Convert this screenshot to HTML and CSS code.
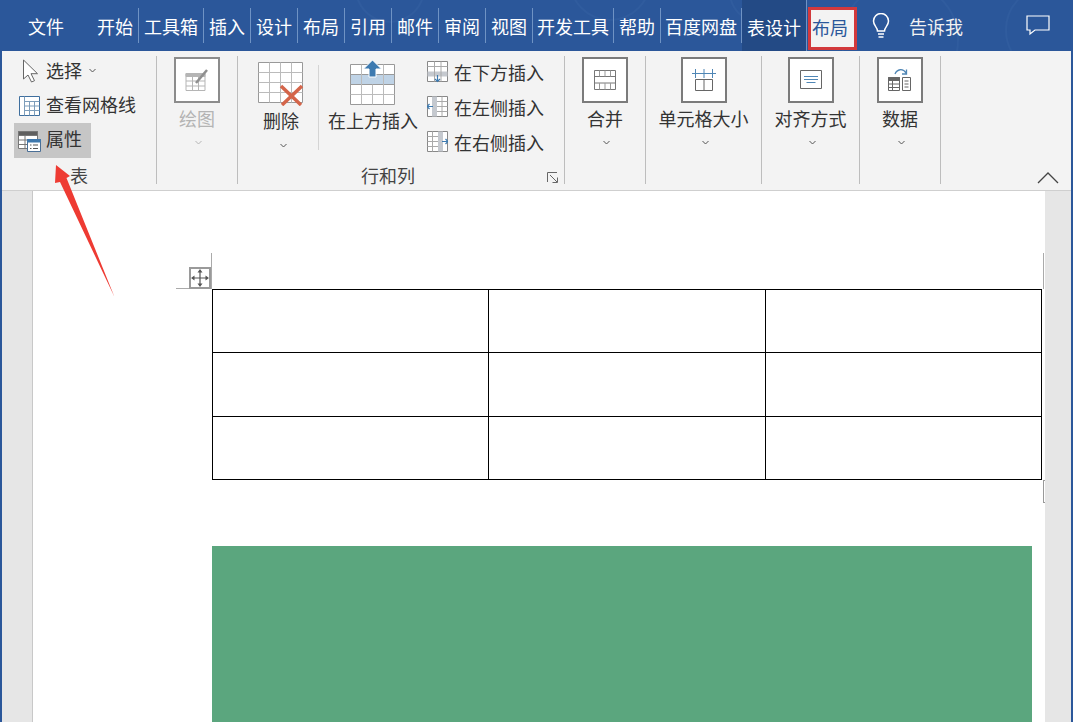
FILE: index.html
```html
<!DOCTYPE html>
<html lang="zh-CN">
<head>
    <meta charset="UTF-8">
    <title>Word 表格布局</title>
    <link rel="stylesheet" href="styles.css">
</head>
<body>
    <header class="titlebar">
        <svg class="title-art" width="1073" height="51" viewBox="0 0 1073 51" fill="none" stroke="#305c9e" stroke-width="2">
            <circle cx="390" cy="-12" r="34"/>
            <circle cx="610" cy="-20" r="40"/>
            <circle cx="900" cy="40" r="58"/>
            <circle cx="1050" cy="30" r="44"/>
            <circle cx="760" cy="-8" r="30"/>
        </svg>
        <div class="tab tab-file">文件</div>
        <div class="tab">开始</div>
        <div class="tab">工具箱</div>
        <div class="tab">插入</div>
        <div class="tab">设计</div>
        <div class="tab">布局</div>
        <div class="tab">引用</div>
        <div class="tab">邮件</div>
        <div class="tab">审阅</div>
        <div class="tab">视图</div>
        <div class="tab tab-tight">开发工具</div>
        <div class="tab">帮助</div>
        <div class="tab tab-tight">百度网盘</div>
        <div class="tab tab-context">表设计</div>
        <div class="tab tab-active">布局</div>
        <svg class="bulb" width="18" height="26" viewBox="0 0 18 26" fill="none" stroke="#fff" stroke-width="1.5">
            <path d="M5.5 18c0-4-4-5-4-10a7.500 7.500 0 0 1 15 0c0 5-4 6-4 10z"/>
            <path d="M6 21h6M6.500 24h5"/>
        </svg>
        <div class="tell-me">告诉我</div>
        <svg class="comment" width="24" height="21" viewBox="0 0 24 21" fill="none" stroke="#fff" stroke-width="1.200">
            <path d="M1 1h22v14H9l-5 4v-4H1z"/>
        </svg>
    </header>

    <div class="workspace">
        <section class="ribbon">
            <div class="group group-table">
                <div class="small-list">
                    <div class="small-btn select-btn">
                        <svg class="small-icon" width="24" height="24" viewBox="0 0 24 24" fill="#fff" stroke="#666">
                            <path d="M5.500 1v19l4.500-4 3.500 7 3-1.300-3.500-7h6.500z"/>
                        </svg>
                        <span>选择</span>
                        <svg class="chev" width="7" height="5" viewBox="0 0 7 5" fill="none" stroke="#555"><path d="M.5 1l3 3 3-3"/></svg>
                    </div>
                    <div class="small-btn grid-btn">
                        <svg class="small-icon" width="24" height="22" viewBox="0 0 24 22" fill="#fff" stroke="#3f6f9e">
                            <path d="M1.500 1.500h20v19h-20z"/>
                            <path d="M6.500 6.500h15M6.500 11h15M6.500 15.500h15M6.500 1.500v19M11.500 6.500v14M16.500 6.500v14" stroke="#7d9dba"/>
                        </svg>
                        <span>查看网格线</span>
                    </div>
                    <div class="small-btn is-on">
                        <svg class="small-icon" width="24" height="22" viewBox="0 0 24 22" fill="#fff" stroke="#777">
                            <path d="M.500 1.500h19v17h-19z"/>
                            <path d="M.500 1.500h19v4h-19z" fill="#5f5f5f"/>
                            <path d="M.500 10h19M.500 14.500h19M7 5.500v13"/>
                            <path d="M9.500 9.500h13v12h-13z" stroke="#4a6f96"/>
                            <path d="M9.500 9.500h13v2.500h-13z" fill="#3f78ad" stroke="#3f78ad"/>
                            <path d="M12 15h1.500M15 15h5M12 18.500h1.500M15 18.500h5" stroke="#555"/>
                        </svg>
                        <span>属性</span>
                    </div>
                </div>
                <div class="group-label">表</div>
            </div>

            <div class="group group-draw">
                <div class="big-btn is-off">
                    <div class="big-box">
                        <svg width="26" height="26" viewBox="0 0 26 26" fill="none" stroke="#b5b5b5">
                            <path d="M2 6.500h19v17H2z"/>
                            <path d="M2 6.500h19v3H2z" fill="#b5b5b5"/>
                            <path d="M2 14h19M2 19h19M8.500 9.500v14M14.500 9.500v14"/>
                            <path d="M12 16L23 3" stroke="#8f8f8f" stroke-width="2.500"/>
                        </svg>
                    </div>
                    <span>绘图</span>
                    <svg class="chev" width="7" height="5" viewBox="0 0 7 5" fill="none" stroke="#b5b5b5"><path d="M.5 1l3 3 3-3"/></svg>
                </div>
            </div>

            <div class="group group-rows">
                <div class="rows-body">
                    <div class="tall-btn delete-btn">
                        <svg width="46" height="44" viewBox="0 0 46 44" fill="#fff" stroke="#999">
                            <path d="M.500.500h44v40h-44z"/>
                            <path d="M.500 10.500h44M.500 20.500h44M.500 30.500h44M11.500.500v40M22.500.500v40M33.500.500v40" stroke="#bbb"/>
                            <path d="M23 24l20 19M44 24L24 43" stroke="#d4654a" stroke-width="3.500"/>
                        </svg>
                        <span>删除</span>
                        <svg class="chev" width="7" height="5" viewBox="0 0 7 5" fill="none" stroke="#555"><path d="M.5 1l3 3 3-3"/></svg>
                    </div>
                    <div class="rows-sep"></div>
                    <div class="tall-btn above-btn">
                        <svg width="46" height="46" viewBox="0 0 46 46" fill="#fff" stroke="#999">
                            <path d="M.500 4.500h44v40h-44z"/>
                            <path d="M.500 14.500h44v10h-44z" fill="#bfd3e6"/>
                            <path d="M.500 34.500h44M11.500 4.500v40M22.500 24.500v20M33.500 4.500v40" stroke="#bbb"/>
                            <path d="M22.500 0l9 9h-5.500v8h-7v-8h-5.500z" fill="#3d7ab0" stroke="#fff"/>
                        </svg>
                        <span>在上方插入</span>
                    </div>
                    <div class="insert-list">
                        <div class="insert-item">
                            <svg width="21" height="22" viewBox="0 0 21 22" fill="#fff" stroke="#888">
                                <path d="M.500.500h20v20h-20z"/>
                                <path d="M.500 10.500h20v5h-20z" fill="#c5c9cf" stroke="none"/>
                                <path d="M.500 5.500h20M7.500.500v20M14 .500v20" stroke="#aaa"/>
                                <path d="M10.500 14v6M8 18l2.500 2.500 2.500-2.500" fill="none" stroke="#3d7ab0" stroke-width="1.200"/>
                            </svg>
                            <span>在下方插入</span>
                        </div>
                        <div class="insert-item">
                            <svg width="21" height="22" viewBox="0 0 21 22" fill="#fff" stroke="#888">
                                <path d="M.500.500h20v20h-20z"/>
                                <path d="M5 .500h5v20H5z" fill="#c5c9cf" stroke="none"/>
                                <path d="M10 5.500h10.500M10 10.500h10.500M10 15.500h10.500M15 .500v20" stroke="#aaa"/>
                                <path d="M6 10.500H0M2.500 8L0 10.500 2.500 13" fill="none" stroke="#3d7ab0" stroke-width="1.200"/>
                            </svg>
                            <span>在左侧插入</span>
                        </div>
                        <div class="insert-item">
                            <svg width="21" height="22" viewBox="0 0 21 22" fill="#fff" stroke="#888">
                                <path d="M.500.500h20v20h-20z"/>
                                <path d="M11 .500h5v20h-5z" fill="#c5c9cf" stroke="none"/>
                                <path d="M.500 5.500H11M.500 10.500H11M.500 15.500H11M5.500 .500v20" stroke="#aaa"/>
                                <path d="M15 10.500h6M18.500 8l2.500 2.500-2.500 2.500" fill="none" stroke="#3d7ab0" stroke-width="1.200"/>
                            </svg>
                            <span>在右侧插入</span>
                        </div>
                    </div>
                </div>
                <div class="label-row">
                    <div class="group-label">行和列</div>
                    <svg class="launcher" width="11" height="11" viewBox="0 0 11 11" fill="none" stroke="#666">
                        <path d="M.500 10V.500H10"/>
                        <path d="M3 3l7 7M10.500 5.500v5h-5"/>
                    </svg>
                </div>
            </div>

            <div class="group group-merge">
                <div class="big-btn">
                    <div class="big-box">
                        <svg width="22" height="20" viewBox="0 0 22 20" fill="none" stroke="#777">
                            <path d="M.500.500h21v19H.500z"/>
                            <path d="M.500 6.500h21M.500 13h21"/>
                            <path d="M5.500.500v6M11 .500v6M16.500 .500v6M5.500 13v6.500M11 13v6.500M16.500 13v6.500" stroke="#999"/>
                        </svg>
                    </div>
                    <span>合并</span>
                    <svg class="chev" width="7" height="5" viewBox="0 0 7 5" fill="none" stroke="#555"><path d="M.5 1l3 3 3-3"/></svg>
                </div>
            </div>

            <div class="group group-size">
                <div class="big-btn">
                    <div class="big-box">
                        <svg width="24" height="22" viewBox="0 0 24 22" fill="none" stroke="#666">
                            <path d="M3.500 10.500h17v11h-17zM12 10.500v11"/>
                            <path d="M0 4.500h24M3.500 0v9M12 0v9M20.500 0v9" stroke="#4f86b5"/>
                        </svg>
                    </div>
                    <span>单元格大小</span>
                    <svg class="chev" width="7" height="5" viewBox="0 0 7 5" fill="none" stroke="#555"><path d="M.5 1l3 3 3-3"/></svg>
                </div>
            </div>

            <div class="group group-align">
                <div class="big-btn">
                    <div class="big-box">
                        <svg width="22" height="20" viewBox="0 0 22 20" fill="none" stroke="#666">
                            <path d="M.500.500h21v18H.500z"/>
                            <path d="M4 6.500h14M4 9.500h14M6.500 12.500h9" stroke="#4f86b5"/>
                        </svg>
                    </div>
                    <span>对齐方式</span>
                    <svg class="chev" width="7" height="5" viewBox="0 0 7 5" fill="none" stroke="#555"><path d="M.5 1l3 3 3-3"/></svg>
                </div>
            </div>

            <div class="group group-data">
                <div class="big-btn">
                    <div class="big-box">
                        <svg width="24" height="24" viewBox="0 0 24 24" fill="#fff" stroke="#666">
                            <path d="M.500 9.500h11v13H.500z"/>
                            <path d="M.500 9.500h11v3H.500z" fill="#666"/>
                            <path d="M.500 16h11M.500 19.500h11M4.500 12.500v10"/>
                            <path d="M14.500 9.500h8v13h-8zM16.500 13h4M16.500 16h4M16.500 19h4"/>
                            <path d="M7 6c2-5 8-6 11-1M18.500 1.500V6H14" fill="none" stroke="#4f86b5" stroke-width="1.300"/>
                        </svg>
                    </div>
                    <span>数据</span>
                    <svg class="chev" width="7" height="5" viewBox="0 0 7 5" fill="none" stroke="#555"><path d="M.5 1l3 3 3-3"/></svg>
                </div>
            </div>

            <div class="collapse-area">
                <svg width="22" height="13" viewBox="0 0 22 13" fill="none" stroke="#444" stroke-width="1.300">
                    <path d="M1 12L11 2l10 10"/>
                </svg>
            </div>
        </section>

        <main class="doc-area">
            <div class="page">
                <div class="ruler-top"></div>
                <div class="ruler-left"></div>
                <div class="ruler-right"></div>
                <div class="ruler-end"></div>
                <div class="move-handle">
                    <svg width="18" height="18" viewBox="0 0 18 18" fill="#555" stroke="#555">
                        <path d="M9 2v14M2 9h14" fill="none" stroke-width="1.200"/>
                        <path d="M9 0l2.500 3.500h-5zM9 18l2.500-3.500h-5zM0 9l3.500-2.500v5zM18 9l-3.500-2.500v5z" stroke="none"/>
                    </svg>
                </div>
                <table class="doc-table">
                    <tr><td class="col-a"></td><td class="col-b"></td><td class="col-a"></td></tr>
                    <tr class="row-mid"><td></td><td></td><td></td></tr>
                    <tr><td></td><td></td><td></td></tr>
                </table>
                <div class="green-block"></div>
            </div>
        </main>
    </div>

    <svg class="arrow" width="130" height="150" viewBox="0 0 130 150">
        <polygon points="56,15 70,26 66.500,28 114.500,147 60,32 55,33" fill="#ee3b33"/>
    </svg>
</body>
</html>
```

FILE: styles.css
```css
html, body {
    margin: 0;
    padding: 0;
    height: 722px;
    overflow: hidden;
}

body {
    position: relative;
    background-color: #2b579a;
    font-family: "Noto Sans CJK SC", "Noto Sans", sans-serif;
    font-size: 18px;
    color: #333333;
}

/* title bar */
.titlebar {
    position: relative;
    display: flex;
    align-items: center;
    height: 51px;
    padding-left: 23px;
    box-sizing: border-box;
    background-color: #2b579a;
    color: #ffffff;
}

.title-art {
    position: absolute;
    left: 0;
    top: 0;
}

.tab {
    position: relative;
    height: 35px;
    padding: 0 5px;
    line-height: 36px;
    border-right: 1px solid #6f93c4;
    white-space: nowrap;
}

.tab-file {
    margin-right: 23px;
    border-right: none;
}

.tab-tight {
    padding: 0 4px;
}

.tab-context {
    height: 51px;
    line-height: 54px;
    background-color: #234a85;
}

.tab-active {
    align-self: flex-start;
    width: 49px;
    height: 43px;
    margin: 7px 0 0 1px;
    padding: 0 5px 0 0;
    box-sizing: border-box;
    line-height: 34px;
    text-align: center;
    background-color: #f3f3f3;
    color: #2b579a;
    border: 3px solid #d2393c;
}

.bulb {
    position: relative;
    margin-left: 15px;
}

.tell-me {
    position: relative;
    margin-left: 19px;
    color: #f2f2f2;
}

.comment {
    position: relative;
    margin-left: 63px;
}

/* ribbon */
.workspace {
    margin: 0 2px;
}

.ribbon {
    display: flex;
    height: 140px;
    padding-top: 5px;
    box-sizing: border-box;
    background-color: #f3f3f3;
    border-bottom: 1px solid #cfcfcf;
}

.group {
    display: flex;
    flex-direction: column;
    height: 128px;
    border-right: 1px solid #bdbdbd;
}

.group-table { width: 154px; }
.group-draw { width: 80px; }
.group-rows { width: 326px; }
.group-merge { width: 80px; }
.group-size { width: 115px; }
.group-align { width: 97px; }
.group-data { width: 80px; }

.group-label {
    height: 20px;
    line-height: 20px;
    text-align: center;
    color: #444444;
}

.small-list {
    flex: 1;
    margin-top: -3px;
    padding-left: 12px;
}

.small-btn {
    display: flex;
    align-items: center;
    gap: 4px;
    width: 77px;
    height: 35px;
    white-space: nowrap;
}

.small-btn.is-on {
    background-color: #c6c6c6;
}

.small-btn span {
    margin-top: -2px;
}

.small-btn.grid-btn span {
    margin-top: -4px;
}

.small-btn.is-on span {
    margin-top: -5px;
}

.small-btn .small-icon {
    flex: none;
    margin-left: 4px;
}

.small-btn .chev {
    flex: none;
    margin-left: 3px;
}

.group-table .group-label {
    margin-top: -2px;
    margin-bottom: -1px;
}

/* big buttons with a boxed icon */
.big-btn {
    flex: 1;
    display: flex;
    flex-direction: column;
    align-items: center;
    padding-top: 1px;
    white-space: nowrap;
}

.big-box {
    display: flex;
    align-items: center;
    justify-content: center;
    width: 46px;
    height: 46px;
    box-sizing: border-box;
    background-color: #ffffff;
    border: 2px solid #7b7b7b;
}

.big-btn span {
    margin-top: 2px;
    line-height: 26px;
}

.big-btn .chev {
    margin: 9px 0 0 3px;
}

.big-btn.is-off .big-box {
    border-color: #8c8c8c;
}

.big-btn.is-off span {
    color: #b4b4b4;
}

/* rows and columns group */
.rows-body {
    flex: 1;
    display: flex;
}

.tall-btn {
    flex: none;
    display: flex;
    flex-direction: column;
    align-items: center;
    white-space: nowrap;
}

.tall-btn span {
    line-height: 26px;
}

.delete-btn {
    width: 46px;
    margin: 6px 0 0 20px;
}

.delete-btn span {
    margin-top: 1px;
}

.delete-btn .chev {
    margin: 10px 0 0 4px;
}

.rows-sep {
    flex: none;
    width: 1px;
    height: 85px;
    margin: 9px 0 0 14px;
    background-color: #d4d4d4;
}

.above-btn {
    width: 90px;
    margin: 4px 0 0 9px;
}

.above-btn span {
    margin-top: 1px;
}

.insert-list {
    margin: -2px 0 0 9px;
}

.insert-item {
    display: flex;
    align-items: center;
    gap: 6px;
    height: 35px;
    white-space: nowrap;
}

.label-row {
    display: flex;
    align-items: center;
    height: 20px;
    margin-top: -2px;
    margin-bottom: -1px;
}

.label-row .group-label {
    width: 300px;
}

.launcher {
    margin: 4px 0 0 9px;
}

.collapse-area {
    flex: 1;
    display: flex;
    justify-content: flex-end;
    align-items: flex-end;
    padding: 0 12px 6px 0;
}

/* document */
.doc-area {
    height: 531px;
    overflow: hidden;
    background-color: #e6e6e6;
    padding-left: 30px;
    padding-right: 26px;
}

.page {
    position: relative;
    height: 531px;
    box-sizing: border-box;
    padding: 98px 0 0 179px;
    background-color: #ffffff;
    border-left: 1px solid #c8c8c8;
}

.doc-table {
    width: 830px;
    table-layout: fixed;
    border-collapse: collapse;
}

.doc-table td {
    height: 62px;
    padding: 0;
    border: 1px solid #000000;
}

.doc-table .row-mid td {
    height: 63px;
}

.col-a { width: 275px; }
.col-b { width: 276px; }

.green-block {
    width: 820px;
    height: 200px;
    margin-top: 66px;
    background-color: #5ba67e;
}

.ruler-top {
    position: absolute;
    left: 143px;
    top: 97px;
    width: 35px;
    height: 1px;
    background-color: #aaaaaa;
}

.ruler-left {
    position: absolute;
    left: 178px;
    top: 62px;
    width: 1px;
    height: 36px;
    background-color: #aaaaaa;
}

.ruler-right {
    position: absolute;
    left: 1010px;
    top: 62px;
    width: 1px;
    height: 36px;
    background-color: #aaaaaa;
}

.ruler-end {
    position: absolute;
    left: 1010px;
    top: 289px;
    width: 2px;
    height: 23px;
    border-left: 1px solid #999999;
    border-top: 1px solid #999999;
    border-bottom: 1px solid #999999;
    box-sizing: border-box;
}

.move-handle {
    position: absolute;
    left: 156px;
    top: 76px;
    display: flex;
    align-items: center;
    justify-content: center;
    width: 22px;
    height: 22px;
    box-sizing: border-box;
    background-color: #ffffff;
    border: 2px solid #9a9a9a;
}

.arrow {
    position: absolute;
    left: 0;
    top: 150px;
}
```
